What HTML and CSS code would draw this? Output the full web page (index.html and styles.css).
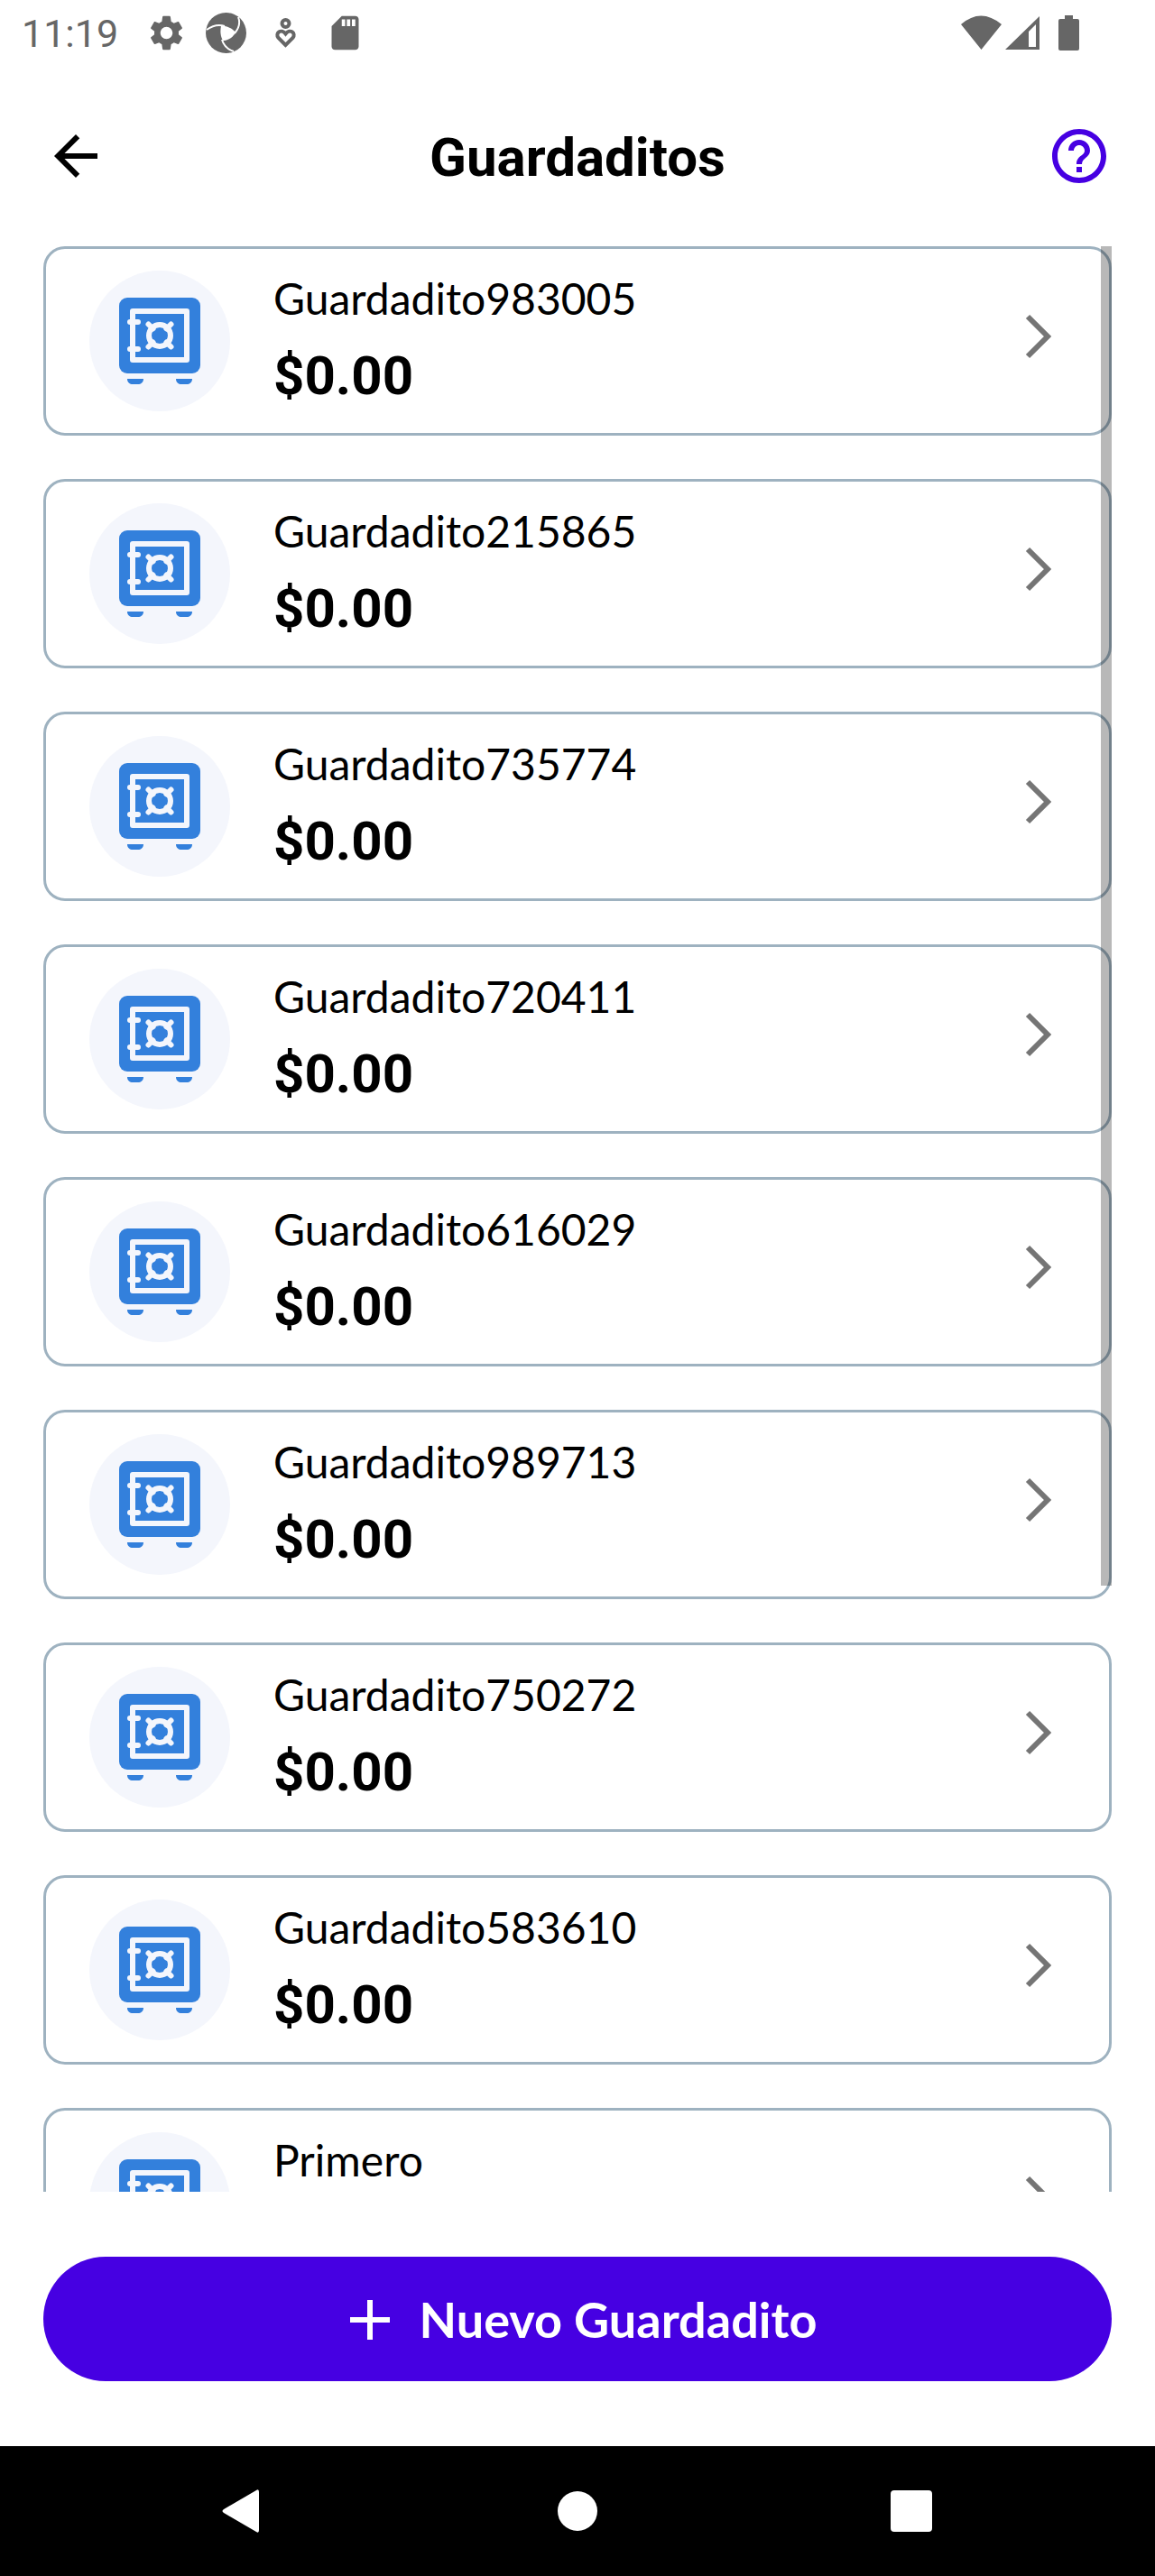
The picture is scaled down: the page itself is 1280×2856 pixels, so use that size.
FILE: index.html
```html
<!DOCTYPE html>
<html lang="es">
<head>
<meta charset="utf-8">
<meta name="viewport" content="width=device-width, initial-scale=1">
<title>Guardaditos</title>
<link rel="stylesheet" href="styles.css">
</head>
<body>
<svg class="sprite" aria-hidden="true">
  <symbol id="safe" viewBox="0 0 156 156">
    <rect x="33" y="30" width="90" height="84" rx="9" fill="#3380dc"/>
    <path d="M42 120h18c0 4-3 6-6 6h-6c-3 0-6-2-6-6zM96 120h18c0 4-3 6-6 6h-6c-3 0-6-2-6-6z" fill="#3380dc"/>
    <g fill="none" stroke="#f4f6fc" stroke-width="6" stroke-linecap="round">
      <rect x="48" y="45" width="60" height="54" stroke-linejoin="round"/>
      <path d="M45 57h9M45 87h9M65.500 59.500l5 5M90.500 59.500l-5 5M65.500 84.500l5-5M90.500 84.500l-5-5"/>
      <circle cx="78" cy="72" r="12"/>
    </g>
  </symbol>
  <symbol id="chevron" viewBox="0 0 30 50">
    <path d="M3 3l22 22L3 47" fill="none" stroke="#757575" stroke-width="6"/>
  </symbol>
</svg>

<div class="status">
  <time class="clock">11:19</time>
  <div class="status-icons">
    <svg viewBox="0 0 24 24" width="45" height="45"><path d="M19.140 12.940c.04-.3.060-.61.060-.94 0-.32-.02-.64-.07-.94l2.030-1.580c.18-.14.23-.41.120-.61l-1.920-3.320c-.12-.22-.37-.29-.59-.22l-2.390.96c-.5-.38-1.030-.7-1.620-.94L14.400 2.810c-.04-.24-.24-.81-.48-.81h-3.840c-.24 0-.43.570-.47.810L9.250 5.350c-.59.240-1.130.57-1.620.940L5.240 5.330c-.22-.08-.47 0-.59.220L2.740 8.870c-.12.210-.08.470.12.610l2.030 1.580c-.05.3-.09.630-.09.940s.02.640.070.940l-2.030 1.580c-.18.140-.23.410-.12.610l1.920 3.320c.12.220.37.290.59.220l2.390-.96c.5.380 1.030.7 1.620.940l.36 2.540c.05.240.240.810.480.810h3.840c.24 0 .44-.57.470-.81l.36-2.540c.59-.24 1.130-.56 1.620-.94l2.390.96c.22.080.47 0 .59-.22l1.920-3.320c.12-.22.070-.47-.12-.61l-2.010-1.580zM12 15.600c-1.980 0-3.600-1.620-3.600-3.600s1.620-3.600 3.600-3.600 3.600 1.620 3.600 3.600-1.620 3.600-3.600 3.600z"/></svg>
    <svg viewBox="0 0 45 45" width="45" height="45"><circle cx="22.500" cy="22.500" r="22.500"/><path class="hole" d="M17 15C22 14 29 17 33 22C30 28 24 31 19 31C16 26 16 20 17 15z"/><path class="cut" d="M1 19C8 14 15 13 21 15M32 23C37 17 38 10 36 5M18 30C20 37 25 41 31 43"/></svg>
    <svg viewBox="0 0 45 45" width="45" height="45"><g class="line"><circle cx="22.500" cy="12" r="4"/><path d="M22.500 36l-8-8c-4-5 3-11 8-4.500c5-6.500 12-.5 8 4.500z"/></g></svg>
    <svg viewBox="0 0 24 24" width="45" height="45"><path d="M18 2h-8L4.020 8 4 20c0 1.100.9 2 2 2h12c1.100 0 2-.9 2-2V4c0-1.100-.9-2-2-2zm-6 6h-2V4h2v4zm3 0h-2V4h2v4zm3 0h-2V4h2v4z"/></svg>
  </div>
  <div class="signal-icons">
    <svg viewBox="0 0 131 40" width="131" height="40"><path d="M0 10Q22 -9 45 10L22.500 38zM87 1v37H49zM83 10l-8 8v17h8zM115 0h9v4h5q2 0 2 2v31q0 2-2 2h-19q-2 0-2-2V6q0-2 2-2h5z" fill-rule="evenodd"/></svg>
  </div>
</div>

<header class="topbar">
  <button class="icon-button" aria-label="Volver"><svg viewBox="0 0 24 24" width="72" height="72"><path d="M20 11H7.830l5.590-5.590L12 4l-8 8 8 8 1.410-1.410L7.830 13H20v-2z"/></svg></button>
  <h1>Guardaditos</h1>
  <button class="icon-button help" aria-label="Ayuda"><svg viewBox="0 0 24 24" width="72" height="72"><path d="M11 18h2v-2h-2v2zm1-16C6.480 2 2 6.480 2 12s4.480 10 10 10 10-4.480 10-10S17.520 2 12 2zm0 18c-4.410 0-8-3.590-8-8s3.590-8 8-8 8 3.590 8 8-3.590 8-8 8zm0-14c-2.210 0-4 1.790-4 4h2c0-1.100.9-2 2-2s2 .9 2 2c0 2-3 1.750-3 5h2c0-2.250 3-2.500 3-5 0-2.210-1.790-4-4-4z"/></svg></button>
</header>

<main class="content">
  <ul class="list">
    <li><a class="card" href="#g983005"><svg class="avatar"><use href="#safe"/></svg><span class="info"><span class="name">Guardadito983005</span><strong class="amount">$0.00</strong></span><svg class="chevron"><use href="#chevron"/></svg></a></li>
    <li><a class="card" href="#g215865"><svg class="avatar"><use href="#safe"/></svg><span class="info"><span class="name">Guardadito215865</span><strong class="amount">$0.00</strong></span><svg class="chevron"><use href="#chevron"/></svg></a></li>
    <li><a class="card" href="#g735774"><svg class="avatar"><use href="#safe"/></svg><span class="info"><span class="name">Guardadito735774</span><strong class="amount">$0.00</strong></span><svg class="chevron"><use href="#chevron"/></svg></a></li>
    <li><a class="card" href="#g720411"><svg class="avatar"><use href="#safe"/></svg><span class="info"><span class="name">Guardadito720411</span><strong class="amount">$0.00</strong></span><svg class="chevron"><use href="#chevron"/></svg></a></li>
    <li><a class="card" href="#g616029"><svg class="avatar"><use href="#safe"/></svg><span class="info"><span class="name">Guardadito616029</span><strong class="amount">$0.00</strong></span><svg class="chevron"><use href="#chevron"/></svg></a></li>
    <li><a class="card" href="#g989713"><svg class="avatar"><use href="#safe"/></svg><span class="info"><span class="name">Guardadito989713</span><strong class="amount">$0.00</strong></span><svg class="chevron"><use href="#chevron"/></svg></a></li>
    <li><a class="card" href="#g750272"><svg class="avatar"><use href="#safe"/></svg><span class="info"><span class="name">Guardadito750272</span><strong class="amount">$0.00</strong></span><svg class="chevron"><use href="#chevron"/></svg></a></li>
    <li><a class="card" href="#g583610"><svg class="avatar"><use href="#safe"/></svg><span class="info"><span class="name">Guardadito583610</span><strong class="amount">$0.00</strong></span><svg class="chevron"><use href="#chevron"/></svg></a></li>
    <li><a class="card" href="#primero"><svg class="avatar"><use href="#safe"/></svg><span class="info"><span class="name">Primero</span></span><svg class="chevron"><use href="#chevron"/></svg></a></li>
  </ul>
  <div class="scroll-thumb"></div>
</main>

<footer class="actions">
  <button class="primary"><svg viewBox="0 0 46 46" width="46" height="46"><path d="M23 1v44M1 23h44" fill="none" stroke="#fff" stroke-width="6"/></svg>Nuevo Guardadito</button>
</footer>

<nav class="system-nav">
  <button aria-label="Atrás"><svg viewBox="0 0 48 48" width="48" height="48"><path d="M3 22Q0 24 3 26L39 47Q42 49 42 45V3Q42 -1 39 1z"/></svg></button>
  <button aria-label="Inicio"><svg viewBox="0 0 48 48" width="48" height="48"><circle cx="24" cy="24" r="22"/></svg></button>
  <button aria-label="Recientes"><svg viewBox="0 0 48 48" width="48" height="48"><rect x="0" y="1" width="46" height="46" rx="4"/></svg></button>
</nav>
</body>
</html>
```
FILE: styles.css
```css
* {
  box-sizing: border-box;
}

body {
  margin: 0;
  height: 100vh;
  display: flex;
  flex-direction: column;
  background: #fff;
  color: #000;
  font-family: Roboto, "Liberation Sans", sans-serif;
}

button {
  padding: 0;
  border: 0;
  background: none;
  color: inherit;
  font: inherit;
  cursor: pointer;
}

svg {
  display: block;
  flex: none;
}

.sprite {
  position: absolute;
  width: 0;
  height: 0;
}

/* Status bar */
.status {
  display: flex;
  align-items: center;
  height: 73px;
  padding: 0 84px 0 24px;
  color: #666;
  fill: #666;
}

.clock {
  width: 138px;
  font-size: 43px;
  line-height: 48px;
}

.status-icons {
  display: flex;
  gap: 21px;
}

.status-icons .hole {
  fill: #fff;
}

.status-icons .cut {
  fill: none;
  stroke: #fff;
  stroke-width: 2;
}

.status-icons .line {
  fill: none;
  stroke: #666;
  stroke-width: 4;
}

.signal-icons {
  margin-left: auto;
}

/* Header */
.topbar {
  display: flex;
  align-items: center;
  justify-content: space-between;
  height: 200px;
  padding: 0 48px;
}

.topbar h1 {
  margin: 0;
  padding-top: 4px;
  font-size: 60px;
  line-height: 72px;
  font-weight: 700;
}

.help {
  fill: #4600e2;
}

/* List */
.content {
  position: relative;
  flex: 1;
  min-height: 0;
  padding: 0 48px;
}

.list {
  display: flex;
  flex-direction: column;
  gap: 48px;
  height: 100%;
  margin: 0;
  padding: 0;
  list-style: none;
  overflow-y: auto;
  scrollbar-width: none;
}

.card {
  display: flex;
  align-items: center;
  height: 210px;
  padding: 0 63px 0 48px;
  border: 3px solid #9eb2c0;
  border-radius: 24px;
  color: inherit;
  text-decoration: none;
}

.avatar {
  width: 156px;
  height: 156px;
  border-radius: 50%;
  background: #f4f6fc;
}

.info {
  display: flex;
  flex-direction: column;
  align-self: flex-start;
  flex: 1;
  gap: 20px;
  padding: 25px 48px 0;
}

.name {
  font-family: Lato, "Liberation Sans", sans-serif;
  font-size: 48px;
  line-height: 60px;
}

.amount {
  font-size: 60px;
  line-height: 72px;
  font-weight: 700;
}

.chevron {
  width: 30px;
  height: 50px;
  margin-bottom: 10px;
}

.scroll-thumb {
  position: absolute;
  top: 0;
  right: 48px;
  width: 12px;
  height: 68.85%;
  background: rgba(0, 0, 0, 0.28);
}

/* Bottom action */
.actions {
  padding: 72px 48px;
}

.primary {
  display: flex;
  align-items: center;
  justify-content: center;
  gap: 32px;
  width: 100%;
  height: 138px;
  padding: 2px 0 0 12px;
  border-radius: 69px;
  background: #4600e2;
  color: #fff;
  font-family: Lato, "Liberation Sans", sans-serif;
  font-size: 54px;
  line-height: 66px;
  font-weight: 700;
}

/* System navigation */
.system-nav {
  display: grid;
  grid-template-columns: repeat(3, 1fr);
  height: 144px;
  padding: 0 84px;
  background: #000;
  fill: #fff;
}

.system-nav button {
  display: flex;
  align-items: center;
  justify-content: center;
}
```
